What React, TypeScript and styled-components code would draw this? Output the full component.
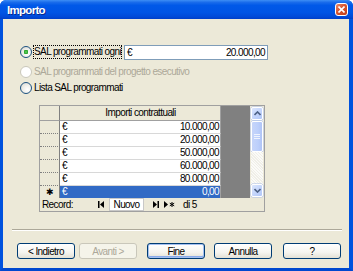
import React from 'react';
import styled, { createGlobalStyle } from 'styled-components';

const font = `'Liberation Sans', Arial, sans-serif`;

const Global = createGlobalStyle`
  html, body { margin: 0; padding: 0; background: #ffffff; }
  * { box-sizing: border-box; }
`;

const rows = ['10.000,00', '20.000,00', '50.000,00', '60.000,00', '80.000,00'];

function NavIcon({ kind }: { kind: 'first' | 'last' | 'new' }) {
  if (kind === 'first')
    return (
      <svg width="6" height="7" viewBox="0 0 6 7">
        <rect x="0" y="0" width="1.5" height="7" fill="#000" />
        <polygon points="6,0 6,7 2,3.5" fill="#000" />
      </svg>
    );
  if (kind === 'last')
    return (
      <svg width="6" height="7" viewBox="0 0 6 7">
        <polygon points="0,0 0,7 4,3.5" fill="#000" />
        <rect x="4.5" y="0" width="1.5" height="7" fill="#000" />
      </svg>
    );
  return (
    <svg width="11" height="7" viewBox="0 0 11 7">
      <polygon points="0,0 0,7 4,3.5" fill="#000" />
      <path d="M8 1v5M5.8 2.2l4.4 2.6M5.8 4.8l4.4-2.6" stroke="#000" strokeWidth="1" />
    </svg>
  );
}

function Chevron({ up }: { up?: boolean }) {
  return (
    <svg width="7" height="5" viewBox="0 0 7 5">
      <path d={up ? 'M0.5 4L3.5 1L6.5 4' : 'M0.5 1L3.5 4L6.5 1'} stroke="#4D6185" strokeWidth="1.6" fill="none" />
    </svg>
  );
}

export default function App() {
  return (
    <>
      <Global />
      <Window>
        <TitleBar>
          <Title>Importo</Title>
          <CloseBtn>
            <svg width="7" height="7" viewBox="0 0 7 7">
              <path d="M0.5 0.5L6.5 6.5M6.5 0.5L0.5 6.5" stroke="#fff" strokeWidth="1.6" />
            </svg>
          </CloseBtn>
        </TitleBar>
        <Client>
          <Options>
            <OptionRow $top={25}>
              <Radio $checked />
              <Label $focused>SAL programmati ogni</Label>
              <MoneyInput>
                <span>€</span>
                <span>20.000,00</span>
              </MoneyInput>
            </OptionRow>
            <OptionRow $top={4}>
              <Radio $disabled />
              <Label $disabled>SAL programmati del progetto esecutivo</Label>
            </OptionRow>
            <OptionRow $top={0}>
              <Radio />
              <Label>Lista SAL programmati</Label>
            </OptionRow>
          </Options>

          <Grid>
            <GridBody>
              <Table>
                <Row $height={15}>
                  <RowHead $header />
                  <Cell $header>Importi contrattuali</Cell>
                </Row>
                {rows.map((v, i) => (
                  <Row key={i} $height={13}>
                    <RowHead />
                    <Cell>
                      <span>€</span>
                      <span>{v}</span>
                    </Cell>
                  </Row>
                ))}
                <Row $height={12}>
                  <RowHead $last>✱</RowHead>
                  <Cell $selected>
                    <span>€</span>
                    <span>0,00</span>
                  </Cell>
                </Row>
              </Table>
              <GrayFill />
              <ScrollCol>
                <ScrollBar>
                  <ScrollBtn><Chevron up /></ScrollBtn>
                  <Thumb>
                    <Grip />
                  </Thumb>
                  <Track />
                  <ScrollBtn><Chevron /></ScrollBtn>
                </ScrollBar>
              </ScrollCol>
            </GridBody>
            <NavBar>
              <NavText $width={56}>Record:</NavText>
              <NavIconBox $left={0}><NavIcon kind="first" /></NavIconBox>
              <NewBox>Nuovo</NewBox>
              <NavIconBox $left={9}><NavIcon kind="last" /></NavIconBox>
              <NavIconBox $left={5}><NavIcon kind="new" /></NavIconBox>
              <NavText $left={8}>di 5</NavText>
            </NavBar>
          </Grid>

          <Spacer />
          <Separator />
          <Buttons>
            <Button>&lt; Indietro</Button>
            <Button $disabled $gap={4}>Avanti &gt;</Button>
            <Button $default $gap={10}>Fine</Button>
            <Button $gap={9}>Annulla</Button>
            <Button $gap={11}>?</Button>
          </Buttons>
        </Client>
      </Window>
    </>
  );
}

const Window = styled.div`
  width: 353px;
  height: 271px;
  display: flex;
  flex-direction: column;
  font-family: ${font};
  font-size: 10px;
  letter-spacing: -0.6px;
  color: #000;
  border-radius: 6px 6px 0 0;
  overflow: hidden;
  background: #0055e5;
`;

const TitleBar = styled.div`
  height: 19px;
  flex-shrink: 0;
  display: flex;
  align-items: center;
  justify-content: space-between;
  padding: 0 5px 0 7px;
  background: linear-gradient(to bottom, #3d8ef5 0%, #1a6ceb 12%, #0058e8 28%, #0055e5 65%, #004ad8 88%, #003fc8 100%);
`;

const Title = styled.div`
  color: #fff;
  font-weight: bold;
  font-size: 11.5px;
  letter-spacing: -0.7px;
  text-shadow: 1px 1px 0 #0a2a8c;
`;

const CloseBtn = styled.div`
  width: 13px;
  height: 13px;
  border: 1px solid #fff;
  border-radius: 3px;
  background: linear-gradient(135deg, #ea8a6c 0%, #d8542e 45%, #c13e18 100%);
  display: flex;
  align-items: center;
  justify-content: center;
`;

const Client = styled.div`
  flex: 1;
  display: flex;
  flex-direction: column;
  background: #ece9d8;
  border-left: 3px solid #0052de;
  border-right: 4px solid #0052de;
  border-bottom: 3px solid #0048cf;
`;

const Options = styled.div`
  display: flex;
  flex-direction: column;
  padding-left: 17px;
`;

const OptionRow = styled.div<{ $top: number }>`
  display: flex;
  align-items: center;
  height: 16px;
  width: 248px;
  margin-top: ${(p) => p.$top}px;
`;

const Radio = styled.span<{ $checked?: boolean; $disabled?: boolean }>`
  width: 12px;
  height: 12px;
  border-radius: 50%;
  flex-shrink: 0;
  border: 1px solid ${(p) => (p.$disabled ? '#cac8bb' : '#1c5180')};
  background: ${(p) =>
    p.$disabled
      ? '#fff'
      : p.$checked
      ? 'radial-gradient(circle, #6bd46b 0, #21a121 2px, transparent 2.5px), radial-gradient(circle at 65% 65%, #fff 0, #f2f2ee 40%, #d6d5cc 100%)'
      : 'radial-gradient(circle at 65% 65%, #fff 0, #f2f2ee 40%, #d6d5cc 100%)'};
`;

const Label = styled.span<{ $disabled?: boolean; $focused?: boolean }>`
  margin-left: 1px;
  line-height: 12px;
  white-space: nowrap;
  color: ${(p) => (p.$disabled ? '#aca899' : '#000')};
  border: 1px dotted ${(p) => (p.$focused ? '#000' : 'transparent')};
`;

const MoneyInput = styled.div`
  margin-left: auto;
  width: 144px;
  height: 15px;
  border: 1px solid #7f9db9;
  background: #fff;
  display: flex;
  align-items: center;
  justify-content: space-between;
  padding: 0 2px 0 2px;
`;

const Grid = styled.div`
  margin: 9px 0 0 36px;
  width: 226px;
  height: 107px;
  border: 1px solid #a0a0a0;
  display: flex;
  flex-direction: column;
`;

const GridBody = styled.div`
  display: flex;
  height: 92px;
`;

const Table = styled.div`
  display: flex;
  flex-direction: column;
  width: 181px;
`;

const Row = styled.div<{ $height: number }>`
  display: flex;
  height: ${(p) => p.$height}px;
`;

const RowHead = styled.div<{ $header?: boolean; $last?: boolean }>`
  width: 20px;
  background: #ece9d8;
  border-right: 1px solid #808080;
  border-bottom: ${(p) => (p.$last ? 'none' : p.$header ? '1px solid #a0a0a0' : '1px dotted #808080')};
  display: flex;
  align-items: center;
  justify-content: center;
  font-size: 9px;
  line-height: 1;
`;

const Cell = styled.div<{ $header?: boolean; $selected?: boolean }>`
  flex: 1;
  display: flex;
  align-items: center;
  justify-content: ${(p) => (p.$header ? 'center' : 'space-between')};
  padding: 0 1px 0 2px;
  line-height: 12px;
  background: ${(p) => (p.$header ? '#ece9d8' : p.$selected ? '#316ac5' : '#fff')};
  color: ${(p) => (p.$selected ? '#fff' : '#000')};
  border-bottom: ${(p) => (p.$selected ? 'none' : p.$header ? '1px solid #a0a0a0' : '1px solid #d8d8d8')};
  border-right: 1px solid #a0a0a0;
`;

const GrayFill = styled.div`
  width: 29px;
  background: #808080;
`;

const ScrollCol = styled.div`
  flex: 1;
  background: #ece9d8;
  padding: 1px;
  display: flex;
  justify-content: center;
`;

const ScrollBar = styled.div`
  width: 12px;
  display: flex;
  flex-direction: column;
  background: #f4f3ee;
`;

const ScrollBtn = styled.div`
  height: 13px;
  flex-shrink: 0;
  border: 1px solid #fff;
  border-radius: 2px;
  background: linear-gradient(135deg, #dbe6fd 0%, #c1d3fb 60%, #b2c7f8 100%);
  box-shadow: 0 0 0 0.5px #a9bde6;
  display: flex;
  align-items: center;
  justify-content: center;
`;

const Thumb = styled.div`
  height: 31px;
  flex-shrink: 0;
  margin-top: 1px;
  border: 1px solid #fff;
  border-radius: 2px;
  background: linear-gradient(to right, #c6d5fa 0%, #bccffb 60%, #b0c4f6 100%);
  box-shadow: 0 0 0 0.5px #a9bde6;
  display: flex;
  align-items: center;
  justify-content: center;
`;

const Grip = styled.div`
  width: 6px;
  height: 5px;
  border-top: 1px solid #eef3fe;
  border-bottom: 1px solid #eef3fe;
  background: linear-gradient(to bottom, transparent 40%, #eef3fe 40%, #eef3fe 60%, transparent 60%);
`;

const Track = styled.div`
  flex: 1;
  background: repeating-linear-gradient(45deg, #fbfbf8 0 1px, #f0efe8 1px 2px);
`;

const NavBar = styled.div`
  flex: 1;
  display: flex;
  align-items: stretch;
  background: #ece9d8;
  padding-left: 2px;
`;

const NavText = styled.span<{ $left?: number; $width?: number }>`
  display: flex;
  align-items: center;
  margin-left: ${(p) => p.$left ?? 0}px;
  ${(p) => (p.$width ? `width: ${p.$width}px;` : '')}
`;

const NavIconBox = styled.span<{ $left: number }>`
  display: flex;
  align-items: center;
  margin-left: ${(p) => p.$left}px;
`;

const NewBox = styled.span`
  margin-left: 5px;
  width: 35px;
  background: #fff;
  border: 1px solid #c8c8c8;
  display: flex;
  align-items: center;
  justify-content: center;
`;

const Spacer = styled.div`
  flex: 1;
`;

const Separator = styled.div`
  margin: 0 7px 0 9px;
  height: 2px;
  border-top: 1px solid #aca899;
  border-bottom: 1px solid #fff;
`;

const Buttons = styled.div`
  display: flex;
  padding: 12px 0 9px 14px;
`;

const Button = styled.div<{ $disabled?: boolean; $default?: boolean; $gap?: number }>`
  width: 58px;
  height: 16px;
  margin-left: ${(p) => p.$gap ?? 0}px;
  display: flex;
  align-items: center;
  justify-content: center;
  border-radius: 3px;
  border: 1px solid ${(p) => (p.$disabled ? '#c9c7ba' : '#003c74')};
  color: ${(p) => (p.$disabled ? '#aca899' : '#000')};
  background: ${(p) =>
    p.$disabled ? '#f5f4ea' : 'linear-gradient(to bottom, #ffffff 0%, #f5f4ef 60%, #e3e0d5 100%)'};
  box-shadow: ${(p) => (p.$default ? 'inset 0 0 0 1px #a4c0f0, inset 0 -1px 0 1px #8aaaea' : 'none')};
`;
